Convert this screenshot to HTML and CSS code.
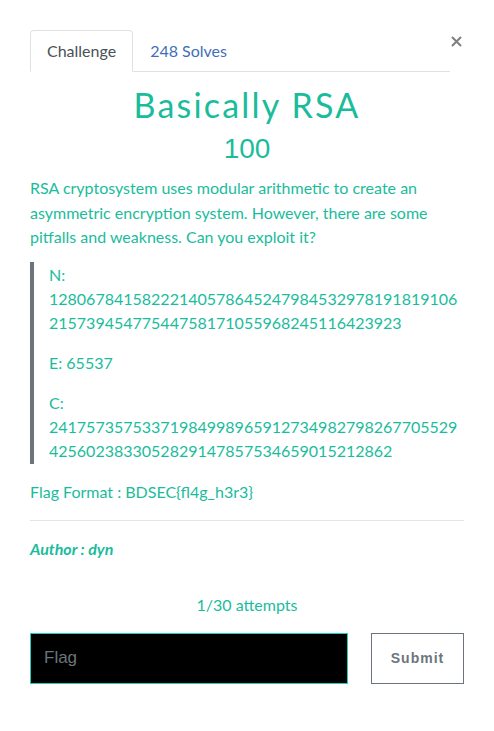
FILE: index.html
```html
<!DOCTYPE html>
<html>
<head>
<meta charset="utf-8">
<link rel="stylesheet" href="styles.css">
</head>
<body>
<div class="modal">
  <div class="top">
    <ul class="tabs">
      <li class="tab active">Challenge</li>
      <li class="tab link">248 Solves</li>
    </ul>
    <button class="close" aria-label="Close"><svg width="11" height="11" viewBox="0 0 11 11"><path d="M1 1L10 10M10 1L1 10" stroke="#7f7f7f" stroke-width="2" fill="none"/></svg></button>
  </div>
  <h2 class="name">Basically RSA</h2>
  <h3 class="value">100</h3>
  <p class="desc">RSA cryptosystem uses modular arithmetic to create an asymmetric encryption system. However, there are some pitfalls and weakness. Can you exploit it?</p>
  <blockquote class="quote">
    <p>N:<br>12806784158222140578645247984532978191819106<br>21573945477544758171055968245116423923</p>
    <p>E: 65537</p>
    <p>C:<br>24175735753371984998965912734982798267705529<br>4256023833052829147857534659015212862</p>
  </blockquote>
  <p class="fmt">Flag Format : BDSEC{fl4g_h3r3}</p>
  <hr class="rule">
  <p class="author">Author : dyn</p>
  <p class="attempts">1/30 attempts</p>
  <div class="submit-row">
    <input class="flag" type="text" placeholder="Flag">
    <button class="submit">Submit</button>
  </div>
</div>
</body>
</html>
```
FILE: styles.css
```css
html, body { margin: 0; padding: 0; background: #fff; }
body { font-family: Lato, "Liberation Sans", sans-serif; color: #1abc9c; }
.modal { padding: 30px 30px 0 30px; }
.top { display: flex; align-items: flex-start; }
.tabs { list-style: none; margin: 0; padding: 0; display: flex; flex: 1; border-bottom: 1px solid #dee2e6; }
.tab { font-size: 16px; line-height: 24px; padding: 8px 16px 8px 16px; border: 1px solid transparent; border-top-left-radius: 4px; border-top-right-radius: 4px; margin-bottom: -1px; }
.tab.active { color: #495057; border-color: #dee2e6 #dee2e6 #fff; background: #fff; }
.tab.link { color: #3f6fb8; }
.close { background: none; border: 0; padding: 0; margin: 6px 1px 0 0; width: 13px; height: 11px; display: flex; justify-content: center; }
.close svg { display: block; }
.name { margin: 13px 0 0; text-align: center; font-family: Lato, sans-serif; font-weight: 400; font-size: 34px; letter-spacing: 2.2px; line-height: 40px; }
.value { margin: 7px 0 0; text-align: center; font-family: "Liberation Sans", sans-serif; font-weight: 400; font-size: 28px; line-height: 34px; }
.desc { margin: 10px 0 0; font-size: 16px; line-height: 24.5px; }
.quote { margin: 12px 0 0; padding: 1px 0 1px 15px; border-left: 4px solid #6c757d; }
.quote p { margin: 0 0 16px; font-size: 16px; line-height: 24px; }
.quote p:last-child { margin-bottom: 0; }
.fmt { margin: 16px 0 0; font-size: 16px; line-height: 24px; }
.rule { margin: 16px 0 0; border: 0; border-top: 1px solid #e5e5e5; }
.author { margin: 16px 0 0; font-size: 16px; font-weight: 700; font-style: italic; line-height: 24px; }
.attempts { margin: 32px 0 0; text-align: center; font-size: 16px; line-height: 24px; }
.submit-row { display: flex; justify-content: space-between; margin-top: 16px; }
.flag { box-sizing: border-box; width: 318px; height: 51px; background: #000; border: 1px solid #1dcfbc; padding: 0 13px; font-family: "Liberation Sans", sans-serif; font-size: 17px; color: #fff; outline: none; }
.flag::placeholder { color: #6c757d; }
.submit { box-sizing: border-box; width: 93px; height: 51px; background: #fff; border: 1px solid #6c757d; color: #6c757d; font-family: "Liberation Sans", sans-serif; font-weight: 700; font-size: 14px; letter-spacing: 1px; }
```
